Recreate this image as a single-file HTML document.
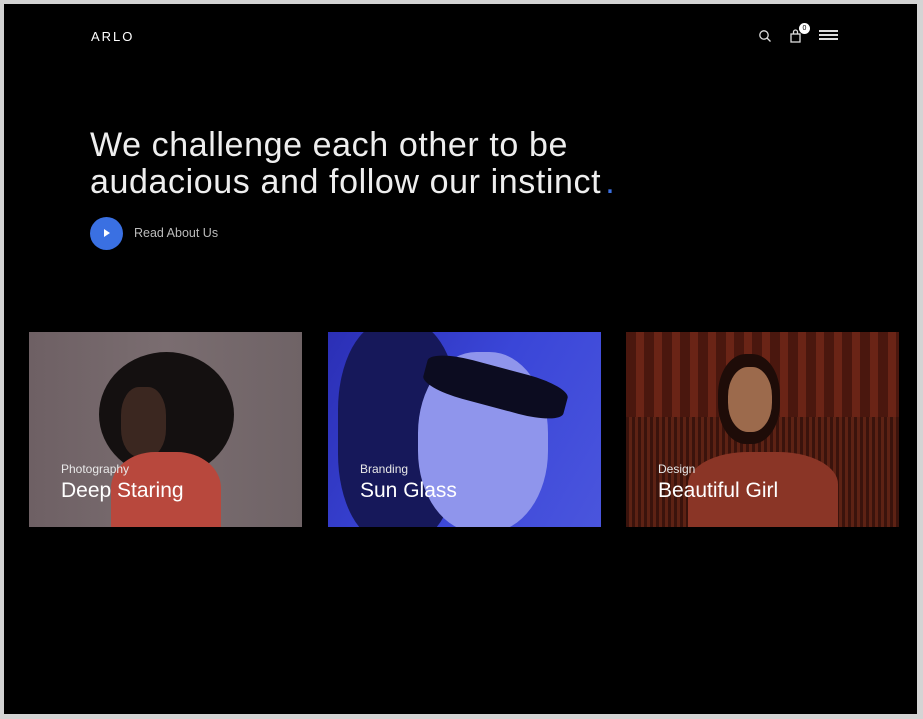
<!DOCTYPE html>
<html><head><meta charset="utf-8"><style>
*{margin:0;padding:0;box-sizing:border-box}
body{width:923px;height:719px;background:#d4d4d4;overflow:hidden;font-family:"Liberation Sans",sans-serif}
#p{position:absolute;left:4px;top:4px;width:913px;height:710px;background:#000}
.abs{position:absolute}
.logo{left:87px;top:25px;color:#fff;font-size:13px;letter-spacing:2px}
h1{position:absolute;left:86px;top:123px;color:#eee;font-weight:normal;font-size:34px;line-height:37px;letter-spacing:0.6px}
.card{position:absolute;top:328px;width:273px;height:195px;overflow:hidden}
.cat{position:absolute;left:32px;top:130px;color:#e8e8e8;font-size:12px}
.tt{position:absolute;left:32px;top:147px;color:#fff;font-size:21px}
</style></head><body><div id="p">
<div class="abs logo">ARLO</div>
<svg class="abs" style="left:754px;top:25px" width="14" height="14" viewBox="0 0 14 14"><circle cx="6" cy="6" r="4.2" stroke="#ddd" stroke-width="1.3" fill="none"/><path d="M9 9l3.5 3.5" stroke="#ddd" stroke-width="1.3"/></svg>
<svg class="abs" style="left:785px;top:24px" width="14" height="16" viewBox="0 0 14 16"><rect x="2" y="6" width="9" height="8" stroke="#ddd" stroke-width="1.3" fill="none"/><path d="M4.5 6V4a2 2 0 0 1 4 0v2" stroke="#ddd" stroke-width="1.3" fill="none"/></svg>
<div class="abs" style="left:795px;top:19px;width:11px;height:11px;border-radius:50%;background:#fff;color:#000;font-size:7px;text-align:center;line-height:11px">0</div>
<div class="abs" style="left:815px;top:26px;width:19px;height:2px;background:#ddd"></div>
<div class="abs" style="left:815px;top:30px;width:19px;height:2px;background:#ddd"></div>
<div class="abs" style="left:815px;top:34px;width:19px;height:2px;background:#ddd"></div>
<h1>We challenge each other to be<br>audacious and follow our instinct<span style="color:#3a6fe0;margin-left:4px">.</span></h1>
<div class="abs" style="left:86px;top:213px;width:33px;height:33px;border-radius:50%;background:#3a70e2"></div>
<div class="abs" style="left:100px;top:225px;width:0;height:0;border-left:6px solid #fff;border-top:4px solid transparent;border-bottom:4px solid transparent"></div>
<div class="abs" style="left:130px;top:222px;color:#bbb;font-size:12.5px">Read About Us</div>

<div class="card" style="left:25px;background:linear-gradient(90deg,#6e6064,#7a6d70 50%,#6f6366)">
<div class="abs" style="left:70px;top:20px;width:135px;height:125px;border-radius:50%;background:#141010"></div>
<div class="abs" style="left:92px;top:55px;width:45px;height:70px;border-radius:40%;background:#3b2720"></div>
<div class="abs" style="left:82px;top:120px;width:110px;height:90px;border-radius:40% 40% 0 0;background:#b8483d"></div>
<div class="cat">Photography</div><div class="tt">Deep Staring</div></div>

<div class="card" style="left:324px;background:linear-gradient(120deg,#2b2fb5,#3a46d8 50%,#4a55dd)">
<div class="abs" style="left:10px;top:-10px;width:120px;height:220px;border-radius:40%;background:#16185a"></div>
<div class="abs" style="left:90px;top:20px;width:130px;height:180px;border-radius:45%;background:#8f95ec"></div>
<div class="abs" style="left:95px;top:35px;width:145px;height:40px;border-radius:30%;background:#0c0c20;transform:rotate(15deg)"></div>
<div class="cat">Branding</div><div class="tt">Sun Glass</div></div>

<div class="card" style="left:622px;background:repeating-linear-gradient(90deg,#4a170e 0 10px,#6a2416 10px 18px)">
<div class="abs" style="left:0;top:85px;width:273px;height:110px;background:repeating-linear-gradient(90deg,#3a130c 0 3px,#5d2214 3px 6px)"></div>
<div class="abs" style="left:92px;top:22px;width:62px;height:90px;border-radius:45%;background:#1e0c08"></div>
<div class="abs" style="left:102px;top:35px;width:44px;height:65px;border-radius:45%;background:#9c6a4c"></div>
<div class="abs" style="left:62px;top:120px;width:150px;height:80px;border-radius:40% 40% 0 0;background:#8a3526"></div>
<div class="cat">Design</div><div class="tt">Beautiful Girl</div></div>
</div></body></html>
